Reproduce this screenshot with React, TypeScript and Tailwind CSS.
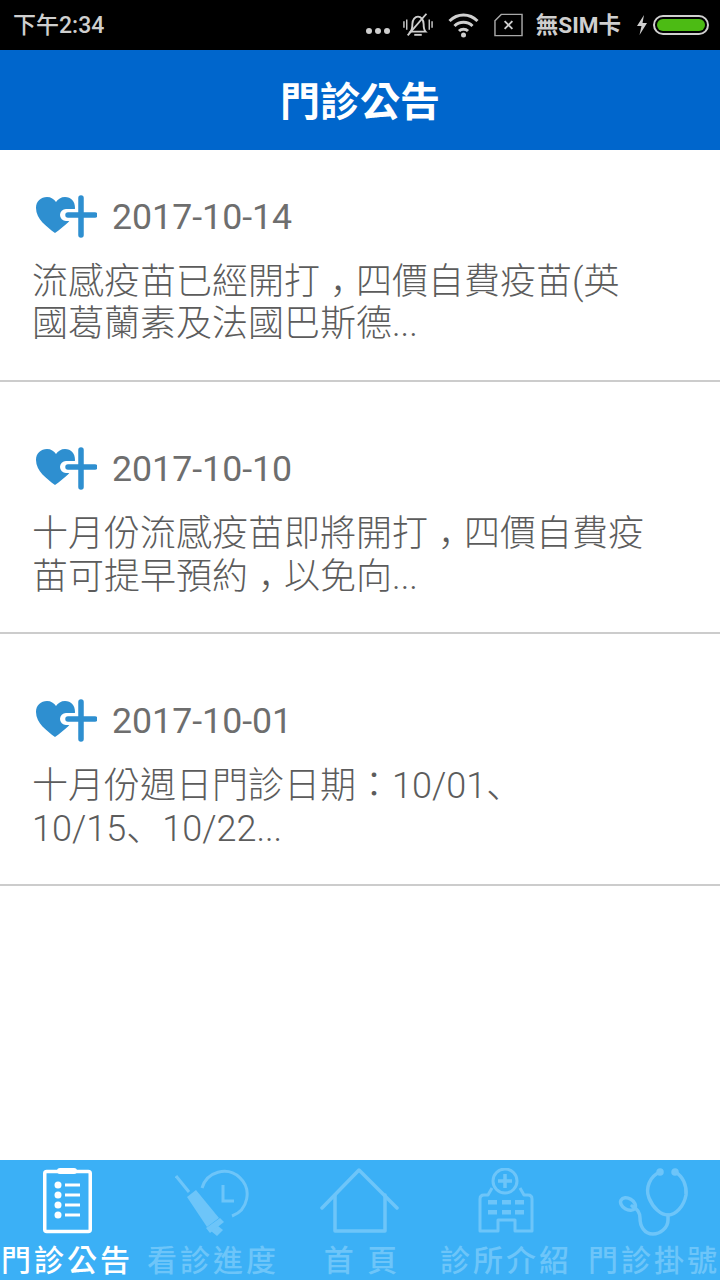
const cjk = "font-['Roboto','Noto_Sans_CJK_TC',sans-serif]";

const notices = [
  { date: "2017-10-14", text: "流感疫苗已經開打，四價自費疫苗(英國葛蘭素及法國巴斯德..." },
  { date: "2017-10-10", text: "十月份流感疫苗即將開打，四價自費疫苗可提早預約，以免向..." },
  { date: "2017-10-01", text: "十月份週日門診日期：10/01、\n10/15、10/22..." },
];

// the comma and 、 sit low in the cell, which the TC face doesn't do
function NoticeText({ text }: { text: string }) {
  return (
    <>
      {text.split(/([，、])/).map((part, i) =>
        part === "，" ? (
          <span key={i} className="inline-block w-[36px] pl-[10px] font-['Noto_Sans_CJK_SC',sans-serif] leading-none">
            {part}
          </span>
        ) : part === "、" ? (
          <span key={i} className="font-['Noto_Sans_CJK_SC',sans-serif] leading-none">{part}</span>
        ) : (
          part
        )
      )}
    </>
  );
}

function HeartPlus() {
  return (
    <svg width="64" height="44" viewBox="0 0 64 44" className="ml-px shrink-0">
      <path
        d="M22 38 C14 32 3 24 3 13 C3 6 8 2 14 2 C18 2 21 4 23 7 C25 4 28 2 32 2 C38 2 42 6 42 13 C42 24 30 32 22 38 Z"
        fill="#2e8fd0"
      />
      <path d="M48 3 V40 M33 20 H62" stroke="#ffffff" strokeWidth="12" strokeLinecap="round" fill="none" />
      <path d="M48 3 V40 M35 20 H62" stroke="#2e8fd0" strokeWidth="5.500" strokeLinecap="round" fill="none" />
    </svg>
  );
}

function StatusBar() {
  return (
    <div className={`flex h-[50px] items-center justify-between bg-black pl-[13px] pr-[11px] text-[#cfcfcf] ${cjk}`}>
      <span className="text-[23px] font-medium leading-none">下午2:34</span>
      <div className="flex items-center">
        {/* dots */}
        <div className="mt-3 flex gap-[3px]">
          <span className="h-[6px] w-[6px] rounded-full bg-[#cfcfcf]" />
          <span className="h-[6px] w-[6px] rounded-full bg-[#cfcfcf]" />
          <span className="h-[6px] w-[6px] rounded-full bg-[#cfcfcf]" />
        </div>
        <svg width="30" height="28" viewBox="0 0 32 28" className="ml-[13px]" fill="none" stroke="#cfcfcf" strokeWidth="2">
          <path d="M8 21 C10 19 10 17 10 13 C10 8 13 5 16 5 C19 5 22 8 22 13 C22 17 22 19 24 21 Z" />
          <path d="M12 24.500 H20" />
          <path d="M25 2 L5 25" />
          <path d="M1 10 V17 M4 8 V19 M28 8 V19 M31 10 V17" strokeWidth="1.500" />
        </svg>
        <svg width="33" height="26" viewBox="0 0 32 26" className="ml-[14px]" fill="none" stroke="#cfcfcf" strokeWidth="3">
          <path d="M2 9 C10 1 22 1 30 9" />
          <path d="M7 14 C12 9 20 9 25 14" />
          <path d="M11.500 19 C14 16.500 18 16.500 20.500 19" />
          <circle cx="16" cy="23" r="2.500" fill="#cfcfcf" stroke="none" />
        </svg>
        <svg width="29" height="24" viewBox="0 0 30 24" className="ml-[14px]" fill="none" stroke="#a8a8a8" strokeWidth="1.500">
          <path d="M1 7.500 L7.500 1 H29 V23 H1 Z" />
          <path d="M11 8 L19 16 M19 8 L11 16" stroke="#cfcfcf" strokeWidth="2" />
        </svg>
        <span className="ml-[13px] text-[22.500px] font-bold leading-none">無SIM卡</span>
        <svg width="12" height="22" viewBox="0 0 12 22" className="ml-[15px]">
          <path d="M8 1 L1 12 H5.500 L3.500 21 L11 9 H6.500 Z" fill="#cfcfcf" />
        </svg>
        <div className="ml-[5px] h-[20px] w-[56px] rounded-full border-2 border-[#cfcfcf] bg-black p-[2px]">
          <div className="h-full w-full rounded-full bg-[#4cbb14]" />
        </div>
      </div>
    </div>
  );
}

function Clipboard() {
  return (
    <svg width="49" height="66" viewBox="0 0 49 66" fill="none" stroke="currentColor">
      <rect x="1.750" y="3.500" width="45.500" height="60" rx="2" strokeWidth="3.500" />
      <rect x="14" y="0" width="20" height="6" rx="3" fill="currentColor" stroke="none" />
      {[17, 27, 37, 47].map((y) => (
        <g key={y}>
          <circle cx="15" cy={y} r="3.500" fill="currentColor" stroke="none" />
          <line x1="22" y1={y} x2="37" y2={y} strokeWidth="3" />
        </g>
      ))}
    </svg>
  );
}

function Syringe() {
  return (
    <svg width="76" height="68" viewBox="0 0 76 68" fill="none" stroke="currentColor">
      <path d="M27 20 A23 23 0 1 1 57 48" strokeWidth="3" />
      <path d="M48 17 V33 H59" strokeWidth="3" />
      <path d="M1 8 L14 24" strokeWidth="3" />
      <path d="M12 29 L21 22 L44 50 L32 59 Z" fill="currentColor" stroke="none" />
      <path d="M31 60 L45 50 L49 54 L35 65 Z" fill="currentColor" stroke="none" />
      <path d="M36 63 L43 58 L48 62 L42 68 Z" fill="currentColor" stroke="none" />
    </svg>
  );
}

function House() {
  return (
    <svg width="84" height="66" viewBox="0 0 84 66" fill="none" stroke="currentColor" strokeWidth="3.500" strokeLinecap="round" strokeLinejoin="round">
      <path d="M2 40 L39 2 L77 40" />
      <path d="M15 27 V63 H65 V27" />
    </svg>
  );
}

function Hospital() {
  return (
    <svg width="56" height="66" viewBox="0 0 56 66" fill="none" stroke="currentColor" strokeWidth="3">
      <circle cx="27" cy="13" r="12" />
      <path d="M27 6 V20 M20 13 H34" strokeWidth="3.500" />
      <path d="M14 20 L10 27 H6 Q2 27 2 31 V63 H20 V52 H37 V63 H54 V31 Q54 27 50 27 H46 L42 20" strokeLinejoin="round" />
      <g fill="currentColor" stroke="none">
        {[10, 24, 37].map((x) => (
          <g key={x}>
            <rect x={x} y="32" width="9" height="4.500" />
            <rect x={x} y="42" width="9" height="4.500" />
          </g>
        ))}
      </g>
    </svg>
  );
}

function Stethoscope() {
  return (
    <svg width="72" height="68" viewBox="0 0 72 68" fill="none" stroke="currentColor" strokeWidth="3.500" strokeLinecap="round">
      <path d="M42 4 C32 8 27 20 31 30 C35 40 43 47 50 47 C58 47 66 38 68 27 C69 18 65 8 57 4" />
      <path d="M50 47 V52 C50 60 42 66 35 66 C26 66 22 58 22 50 C22 44 18 40 14 38" />
      <ellipse cx="10" cy="36" rx="8" ry="5.500" transform="rotate(30 10 36)" />
      <circle cx="42" cy="4" r="2" fill="currentColor" />
      <circle cx="57" cy="4" r="2" fill="currentColor" />
    </svg>
  );
}

const tabs = [
  { label: "門診公告", Icon: Clipboard, active: true },
  { label: "看診進度", Icon: Syringe, active: false },
  { label: "首 頁", Icon: House, active: false },
  { label: "診所介紹", Icon: Hospital, active: false },
  { label: "門診掛號", Icon: Stethoscope, active: false },
];

function BottomNav() {
  return (
    <div className={`h-[120px] bg-[#3bb0f6] ${cjk}`}>
      {/* columns aren't even in the picture, the last one runs past the edge */}
      <div className="grid w-[728px] grid-cols-[134px_158px_140px_148px_148px]">
        {tabs.map(({ label, Icon, active }) => (
          <div
            key={label}
            className={`flex flex-col items-center pt-[8px] ${active ? "text-white" : "text-[#6dc5f9]"}`}
          >
            <div className="flex h-[68px] items-start justify-center">
              <Icon />
            </div>
            <span className="mt-[8px] whitespace-nowrap text-[30px] font-medium leading-[34px] tracking-[3px]">
              {label}
            </span>
          </div>
        ))}
      </div>
    </div>
  );
}

export default function App() {
  return (
    <div className={`flex h-[1280px] w-[720px] flex-col overflow-hidden bg-white ${cjk}`}>
      <StatusBar />
      <div className="flex h-[100px] items-center justify-center bg-[#0066cc] pt-[5px]">
        <h1 className="text-[40px] font-bold leading-none text-white">門診公告</h1>
      </div>

      <div className="flex-1">
        {notices.map((n, i) => (
          <div
            key={n.date}
            className={`h-[232px] border-b-2 border-[#cccccc] pl-[32px] pr-[70px] pt-[45px] ${i > 0 ? "mt-5" : ""}`}
          >
            <div className="flex h-[44px] items-center">
              <HeartPlus />
              <span className="ml-[15px] mt-[2px] text-[35.700px] leading-none text-[#6e6e6e]">{n.date}</span>
            </div>
            <p className="mt-[21px] whitespace-pre-line text-[36px] font-light leading-[42px] text-[#5c5c5c]">
              <NoticeText text={n.text} />
            </p>
          </div>
        ))}
      </div>

      <BottomNav />
    </div>
  );
}
